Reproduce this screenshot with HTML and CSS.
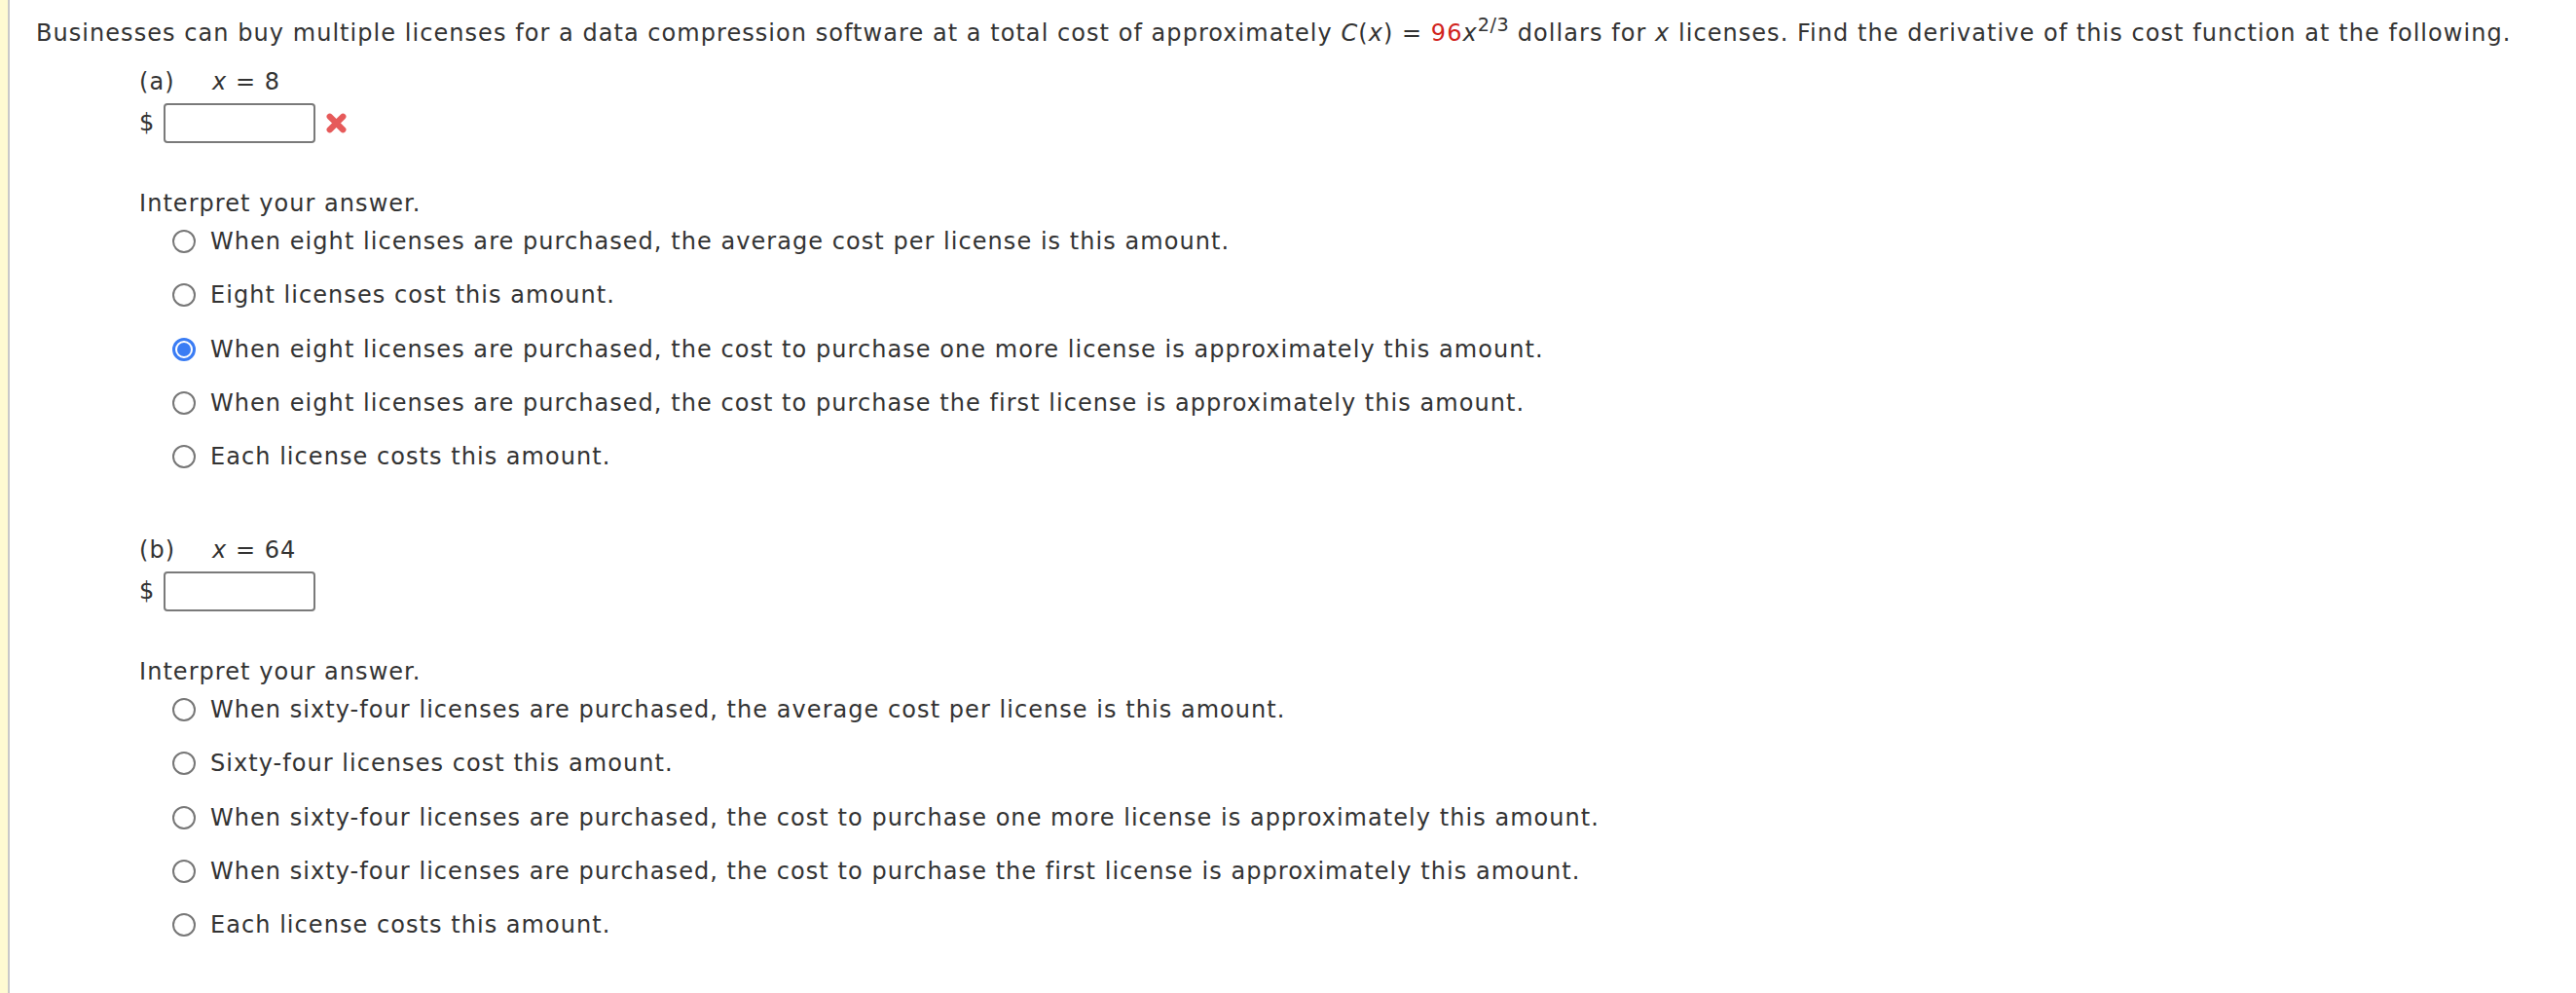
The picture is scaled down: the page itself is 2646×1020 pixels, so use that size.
FILE: index.html
```html
<!DOCTYPE html>
<html>
<head>
<meta charset="utf-8">
<link rel="stylesheet" href="styles.css">
</head>
<body>
<div class="page">
  <div class="sidebar"></div>
  <div class="content">
    <p class="stem">Businesses can buy multiple licenses for a data compression software at a total cost of approximately <i>C</i>(<i>x</i>) = <span class="red">96</span><i>x</i><sup>2/3</sup> dollars for <i>x</i> licenses. Find the derivative of this cost function at the following.</p>

    <div class="part">
      <div class="part-label"><span class="letter">(a)</span><span class="cond"><i>x</i> = 8</span></div>
      <div class="answer-row">
        <span class="dollar">$</span>
        <span class="input"></span>
        <svg class="wrong" viewBox="0 0 22 22" width="23" height="23"><path d="M4.5 4.5 L17.5 17.5 M17.5 4.5 L4.5 17.5" stroke="#e65a5a" stroke-width="6" stroke-linecap="round"/></svg>
      </div>
      <p class="interpret">Interpret your answer.</p>
      <ul class="options">
        <li><span class="radio"></span>When eight licenses are purchased, the average cost per license is this amount.</li>
        <li><span class="radio"></span>Eight licenses cost this amount.</li>
        <li><span class="radio checked"></span>When eight licenses are purchased, the cost to purchase one more license is approximately this amount.</li>
        <li><span class="radio"></span>When eight licenses are purchased, the cost to purchase the first license is approximately this amount.</li>
        <li><span class="radio"></span>Each license costs this amount.</li>
      </ul>
    </div>

    <div class="part part-b">
      <div class="part-label"><span class="letter">(b)</span><span class="cond"><i>x</i> = 64</span></div>
      <div class="answer-row">
        <span class="dollar">$</span>
        <span class="input"></span>
      </div>
      <p class="interpret">Interpret your answer.</p>
      <ul class="options">
        <li><span class="radio"></span>When sixty-four licenses are purchased, the average cost per license is this amount.</li>
        <li><span class="radio"></span>Sixty-four licenses cost this amount.</li>
        <li><span class="radio"></span>When sixty-four licenses are purchased, the cost to purchase one more license is approximately this amount.</li>
        <li><span class="radio"></span>When sixty-four licenses are purchased, the cost to purchase the first license is approximately this amount.</li>
        <li><span class="radio"></span>Each license costs this amount.</li>
      </ul>
    </div>
  </div>
</div>
</body>
</html>
```
FILE: styles.css
```css
html, body {
  margin: 0;
  padding: 0;
  background: #ffffff;
}
body {
  font-family: "DejaVu Sans", Verdana, sans-serif;
  font-size: 24px;
  letter-spacing: 1.05px;
  color: #333333;
}
.page {
  display: flex;
  min-height: 1020px;
}
.sidebar {
  width: 8px;
  background: #fffbd2;
  border-right: 2px solid #c9c9c9;
  flex: none;
}
.content {
  padding: 19px 0 0 27px;
  flex: 1;
}
p, ul {
  margin: 0;
  padding: 0;
}
.stem {
  line-height: 30px;
  white-space: nowrap;
}
.red {
  color: #d1241d;
}
sup {
  font-size: 0.8em;
  line-height: 0;
  vertical-align: 0.5em;
  letter-spacing: 0.5px;
}
.part {
  padding-left: 106px;
  margin-top: 20px;
}
.part-b {
  margin-top: 66px;
}
.part-label {
  display: flex;
  line-height: 30px;
}
.letter {
  width: 75px;
}
.answer-row {
  display: flex;
  align-items: center;
  margin-top: 6px;
  height: 42px;
}
.dollar {
  width: 25px;
}
.input {
  width: 152px;
  height: 37px;
  border: 2px solid #7a7a7a;
  border-radius: 4px;
  box-sizing: content-box;
}
.wrong {
  margin-left: 10px;
  filter: blur(0.4px);
}
.interpret {
  margin-top: 47px;
  line-height: 30px;
}
.options {
  list-style: none;
  margin-top: 9px;
  padding-left: 34px;
}
.options li {
  display: flex;
  align-items: center;
  height: 30px;
  line-height: 30px;
  margin-bottom: 25.3px;
  white-space: nowrap;
}
.radio {
  width: 20px;
  height: 20px;
  border: 2px solid #777777;
  border-radius: 50%;
  margin-right: 15px;
  flex: none;
  position: relative;
}
.radio.checked {
  border: 3px solid #3a7cf4;
  width: 18px;
  height: 18px;
}
.radio.checked::after {
  content: "";
  position: absolute;
  left: 2px;
  top: 2px;
  width: 14px;
  height: 14px;
  border-radius: 50%;
  background: #3a7cf4;
}
```
